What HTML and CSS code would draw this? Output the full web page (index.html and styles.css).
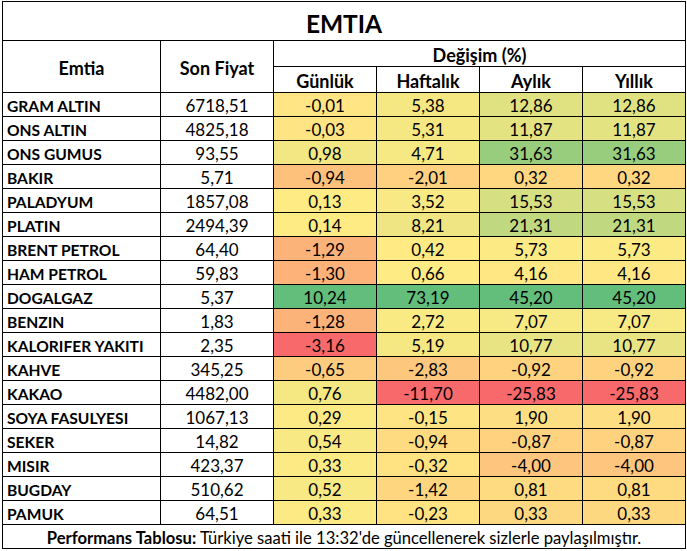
FILE: index.html
```html
<!DOCTYPE html>
<html lang="tr">
<head>
<meta charset="utf-8">
<title>EMTIA</title>
<link rel="stylesheet" href="styles.css">
</head>
<body>
<div class="sheet" id="sheet">
  <div class="cell title">EMTIA</div>
  <div class="cell head tall">Emtia</div>
  <div class="cell head tall">Son Fiyat</div>
  <div class="cell head group">Değişim (%)</div>
  <div class="cell head">Günlük</div>
  <div class="cell head">Haftalık</div>
  <div class="cell head">Aylık</div>
  <div class="cell head">Yıllık</div>

  <div class="cell name">GRAM ALTIN</div><div class="cell num">6718,51</div><div class="cell num pct">-0,01</div><div class="cell num pct">5,38</div><div class="cell num pct">12,86</div><div class="cell num pct">12,86</div>
  <div class="cell name">ONS ALTIN</div><div class="cell num">4825,18</div><div class="cell num pct">-0,03</div><div class="cell num pct">5,31</div><div class="cell num pct">11,87</div><div class="cell num pct">11,87</div>
  <div class="cell name">ONS GUMUS</div><div class="cell num">93,55</div><div class="cell num pct">0,98</div><div class="cell num pct">4,71</div><div class="cell num pct">31,63</div><div class="cell num pct">31,63</div>
  <div class="cell name">BAKIR</div><div class="cell num">5,71</div><div class="cell num pct">-0,94</div><div class="cell num pct">-2,01</div><div class="cell num pct">0,32</div><div class="cell num pct">0,32</div>
  <div class="cell name">PALADYUM</div><div class="cell num">1857,08</div><div class="cell num pct">0,13</div><div class="cell num pct">3,52</div><div class="cell num pct">15,53</div><div class="cell num pct">15,53</div>
  <div class="cell name">PLATIN</div><div class="cell num">2494,39</div><div class="cell num pct">0,14</div><div class="cell num pct">8,21</div><div class="cell num pct">21,31</div><div class="cell num pct">21,31</div>
  <div class="cell name">BRENT PETROL</div><div class="cell num">64,40</div><div class="cell num pct">-1,29</div><div class="cell num pct">0,42</div><div class="cell num pct">5,73</div><div class="cell num pct">5,73</div>
  <div class="cell name">HAM PETROL</div><div class="cell num">59,83</div><div class="cell num pct">-1,30</div><div class="cell num pct">0,66</div><div class="cell num pct">4,16</div><div class="cell num pct">4,16</div>
  <div class="cell name">DOGALGAZ</div><div class="cell num">5,37</div><div class="cell num pct">10,24</div><div class="cell num pct">73,19</div><div class="cell num pct">45,20</div><div class="cell num pct">45,20</div>
  <div class="cell name">BENZIN</div><div class="cell num">1,83</div><div class="cell num pct">-1,28</div><div class="cell num pct">2,72</div><div class="cell num pct">7,07</div><div class="cell num pct">7,07</div>
  <div class="cell name">KALORIFER YAKITI</div><div class="cell num">2,35</div><div class="cell num pct">-3,16</div><div class="cell num pct">5,19</div><div class="cell num pct">10,77</div><div class="cell num pct">10,77</div>
  <div class="cell name">KAHVE</div><div class="cell num">345,25</div><div class="cell num pct">-0,65</div><div class="cell num pct">-2,83</div><div class="cell num pct">-0,92</div><div class="cell num pct">-0,92</div>
  <div class="cell name">KAKAO</div><div class="cell num">4482,00</div><div class="cell num pct">0,76</div><div class="cell num pct">-11,70</div><div class="cell num pct">-25,83</div><div class="cell num pct">-25,83</div>
  <div class="cell name">SOYA FASULYESI</div><div class="cell num">1067,13</div><div class="cell num pct">0,29</div><div class="cell num pct">-0,15</div><div class="cell num pct">1,90</div><div class="cell num pct">1,90</div>
  <div class="cell name">SEKER</div><div class="cell num">14,82</div><div class="cell num pct">0,54</div><div class="cell num pct">-0,94</div><div class="cell num pct">-0,87</div><div class="cell num pct">-0,87</div>
  <div class="cell name">MISIR</div><div class="cell num">423,37</div><div class="cell num pct">0,33</div><div class="cell num pct">-0,32</div><div class="cell num pct">-4,00</div><div class="cell num pct">-4,00</div>
  <div class="cell name">BUGDAY</div><div class="cell num">510,62</div><div class="cell num pct">0,52</div><div class="cell num pct">-1,42</div><div class="cell num pct">0,81</div><div class="cell num pct">0,81</div>
  <div class="cell name">PAMUK</div><div class="cell num">64,51</div><div class="cell num pct">0,33</div><div class="cell num pct">-0,23</div><div class="cell num pct">0,33</div><div class="cell num pct">0,33</div>

  <div class="cell footer"><b>Performans Tablosu:</b>&nbsp;Türkiye saati ile 13:32'de güncellenerek sizlerle paylaşılmıştır.</div>
</div>
<script src="app.js"></script>
</body>
</html>
```

FILE: styles.css
```css
html, body {
  margin: 0;
  padding: 0;
  background: #ffffff;
}

body {
  font-family: "Lato", "Liberation Sans", sans-serif;
  color: #000000;
}

.sheet {
  display: grid;
  grid-template-columns: 157px 112px 102px 102px 102px 102px;
  grid-template-rows: 38px 25px 25px repeat(18, 23px) 23px;
  gap: 1px;
  padding: 1px;
  background: #000000;
  width: max-content;
  margin: 1px 0 0 2px;
}

.cell {
  background: #ffffff;
  display: flex;
  align-items: center;
  justify-content: center;
  white-space: nowrap;
  font-size: 17px;
  padding-top: 2px;
  box-sizing: border-box;
  overflow: hidden;
}

.title {
  grid-column: 1 / -1;
  font-size: 24.5px;
  font-weight: 700;
  padding-top: 5px;
}

.head {
  font-weight: 700;
  font-size: 18px;
}

.tall {
  grid-row: span 2;
}

.group {
  grid-column: span 4;
}

.name {
  justify-content: flex-start;
  padding-left: 4px;
  font-weight: 700;
  font-size: 15.6px;
}

.footer {
  grid-column: 1 / -1;
  font-size: 16.6px;
}
```

FILE: app.js
```js
(function () {
  var red = [248, 105, 107], yellow = [255, 235, 132], green = [99, 190, 123];
  var cells = Array.prototype.slice.call(document.querySelectorAll('.pct'));
  var cols = [[], [], [], []];
  cells.forEach(function (c, i) {
    cols[i % 4].push({ el: c, v: parseFloat(c.textContent.replace(',', '.')) });
  });
  function mix(a, b, t) {
    return 'rgb(' + [0, 1, 2].map(function (k) { return Math.round(a[k] + (b[k] - a[k]) * t); }).join(',') + ')';
  }
  cols.forEach(function (col) {
    var vals = col.map(function (x) { return x.v; }).sort(function (a, b) { return a - b; });
    var n = vals.length, min = vals[0], max = vals[n - 1];
    var pos = (n - 1) * 0.5, lo = Math.floor(pos), hi = Math.ceil(pos);
    var mid = vals[lo] + (vals[hi] - vals[lo]) * (pos - lo);
    col.forEach(function (x) {
      var color;
      if (x.v <= mid) color = mix(red, yellow, mid === min ? 1 : (x.v - min) / (mid - min));
      else color = mix(yellow, green, (x.v - mid) / (max - mid));
      x.el.style.backgroundColor = color;
    });
  });
})();
```
